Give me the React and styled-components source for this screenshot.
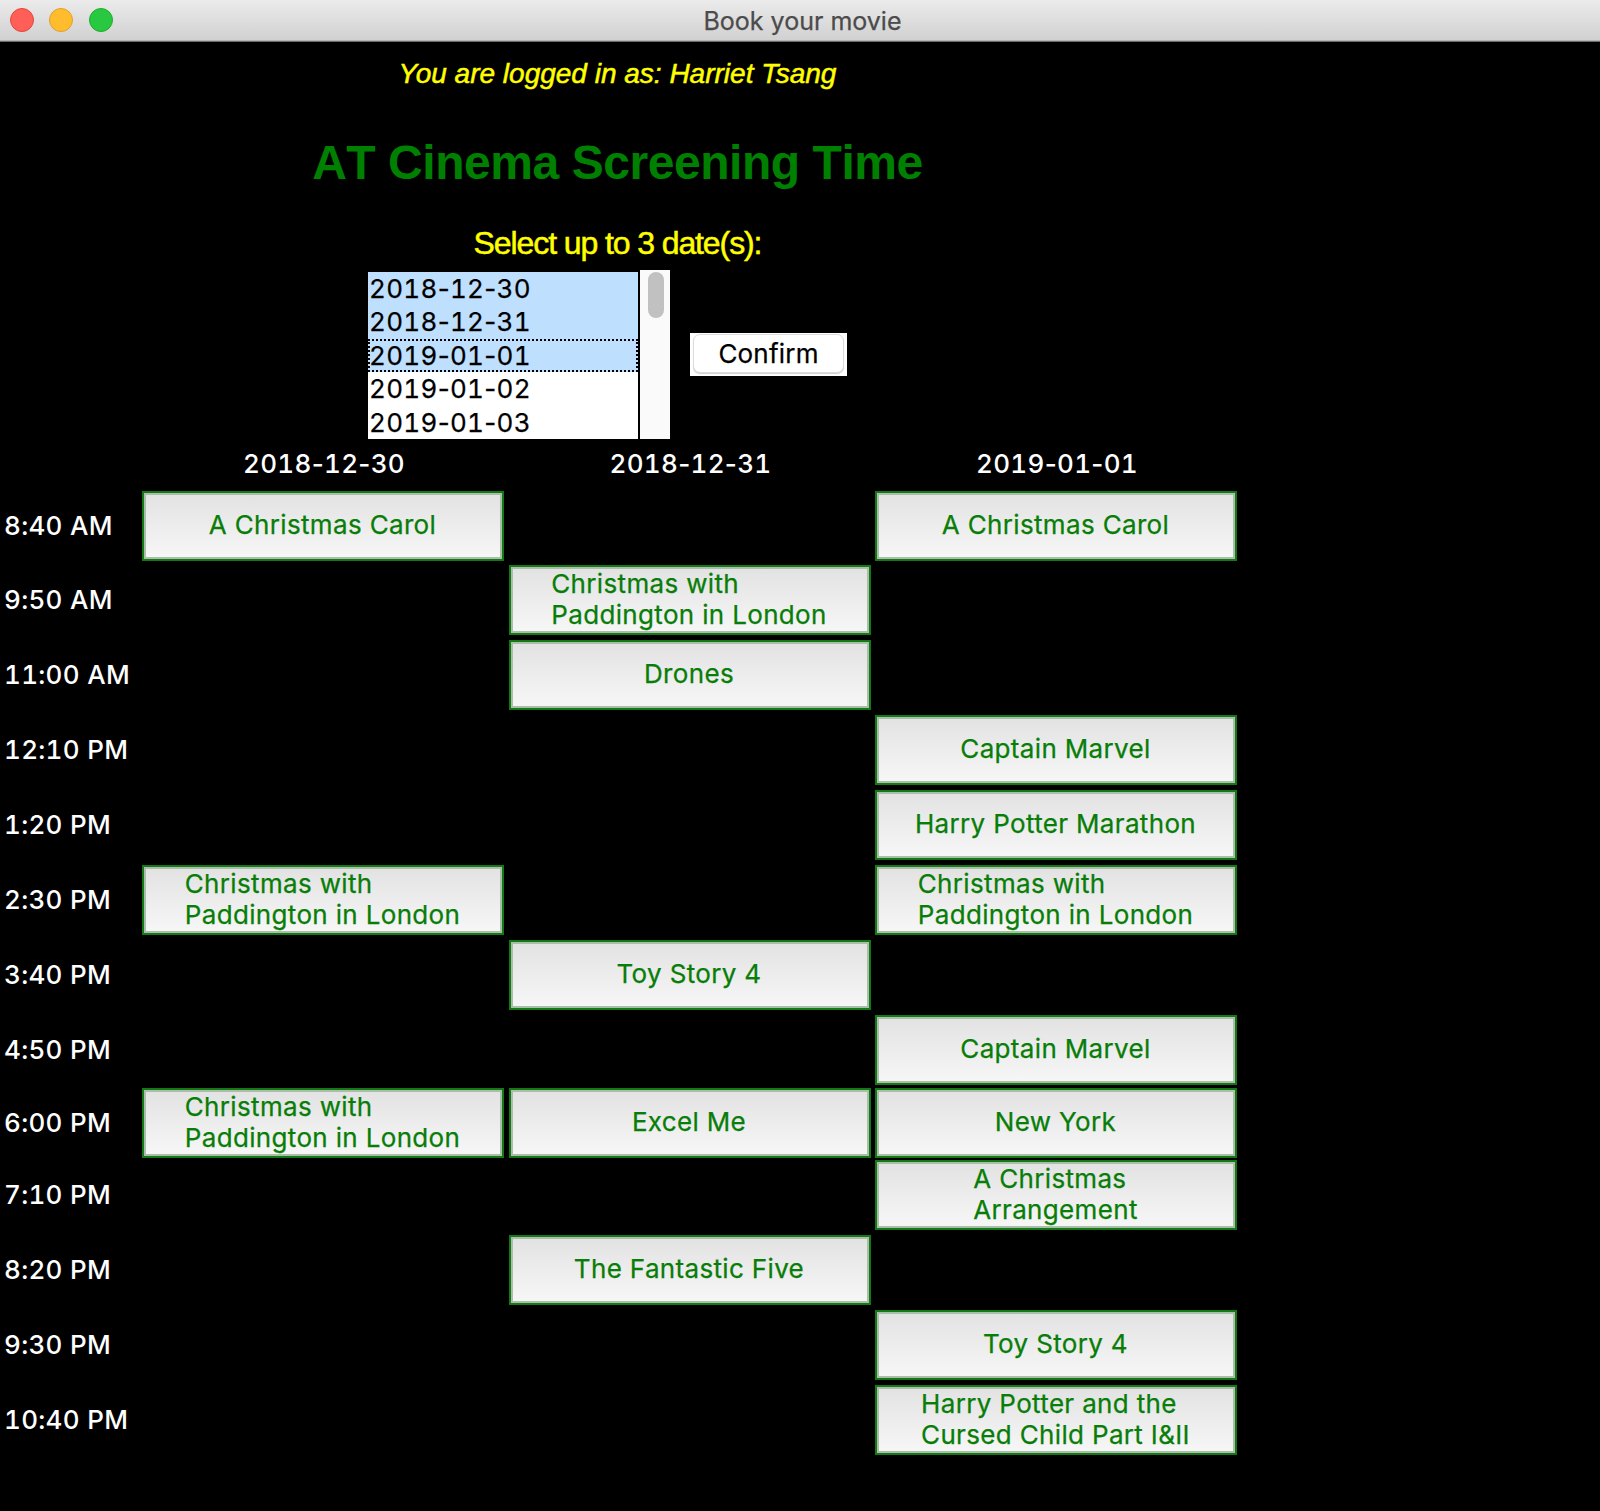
import React from "react";
import styled, { createGlobalStyle } from "styled-components";

const UI = `Inter, "Liberation Sans", sans-serif`;
const ARIAL = `"Liberation Sans", Arial, sans-serif`;

const GlobalStyle = createGlobalStyle`
  * { box-sizing: border-box; }
  body { margin: 0; background: #000; }
`;

const Window = styled.div`
  width: 1600px;
  height: 1511px;
  background: #000;
  overflow: hidden;
  font-family: ${UI};
  font-size: 26px;
`;

const TitleBar = styled.header`
  display: grid;
  grid-template-columns: 1fr auto 1fr;
  align-items: center;
  height: 42px;
  padding: 0 5px 1px 10px;
  background: linear-gradient(#ebebeb, #d0d0d0);
  border-bottom: 1px solid #6c6c6c;
  box-shadow: inset 0 -1px 0 #b4b4b4;
`;

const Lights = styled.div`
  display: flex;
  gap: 15.3px;
`;

const Light = styled.span`
  width: 24px;
  height: 24px;
  border-radius: 50%;
  background: ${(p) => p.$fill};
  border: 1px solid ${(p) => p.$edge};
`;

const WindowTitle = styled.span`
  padding-top: 2px;
  color: #4b4b4b;
  font-size: 25px;
  line-height: 38px;
  -webkit-text-stroke: 0.25px #4b4b4b;
`;

const Content = styled.main`
  width: 1237px;
`;

const Intro = styled.div`
  padding: 14px 2px 0 0;
  text-align: center;
`;

const Login = styled.p`
  margin: 0;
  font: italic 28px/36px ${ARIAL};
  color: #ffff00;
  -webkit-text-stroke: 0.5px #ffff00;
`;

const Heading = styled.h1`
  margin: 42px 0 0;
  font: bold 48px/58px ${ARIAL};
  font-kerning: none;
  letter-spacing: -0.45px;
  color: #008000;
`;

const Prompt = styled.p`
  margin: 31px 0 0;
  font: 32px/40px ${ARIAL};
  letter-spacing: -1.1px;
  color: #ffff00;
  -webkit-text-stroke: 0.5px #ffff00;
`;

const Picker = styled.div`
  display: flex;
  align-items: center;
  justify-content: flex-start;
  gap: 20px;
  margin: 7px 0 0 368px;
`;

const ListFrame = styled.div`
  display: flex;
  align-items: flex-end;
  gap: 2px;
  height: 169px;
`;

const DateList = styled.ul`
  width: 270px;
  margin: 0;
  padding: 0;
  list-style: none;
  background: #fff;
`;

const DateOption = styled.li`
  height: 33.5px;
  padding-left: 1px;
  line-height: 33.5px;
  color: #000;
  background: ${(p) => (p.$selected ? "#bfdfff" : "#fff")};
  outline: ${(p) => (p.$focused ? "2px dotted #000" : "none")};
  outline-offset: -2px;
  -webkit-text-stroke: 0.25px #000;
`;

const Digits = styled.span`
  font-feature-settings: "tnum";
  letter-spacing: 0.3px;
`;

const Dash = styled.span`
  font-feature-settings: normal;
`;

const Track = styled.div`
  width: 30px;
  height: 169px;
  padding: 2px 0 0 8px;
  background: #fafafa;
`;

const Thumb = styled.div`
  width: 16px;
  height: 46px;
  border-radius: 8px;
  background: #c1c1c1;
`;

const ConfirmFrame = styled.div`
  width: 157px;
  height: 43px;
  padding: 1px 3px 3px;
  background: #fff;
`;

const ConfirmButton = styled.button`
  width: 151px;
  height: 39px;
  padding: 1px 0 0;
  border: 1px solid #dcdcdc;
  border-radius: 7px;
  background: #fff;
  box-shadow: 0 1px 1px #cfcfcf;
  font: 26px/34px ${UI};
  letter-spacing: 0.2px;
  color: #000;
  -webkit-text-stroke: 0.25px #000;
`;

const Row = styled.div`
  display: grid;
  grid-template-columns: 137.5px 362px 362px 362px;
  column-gap: 4.5px;
  align-items: start;
  height: ${(p) => p.$height}px;
`;

const DateHeader = styled.span`
  padding-left: 2px;
  text-align: center;
  line-height: 50px;
  font-weight: 500;
  color: #fff;
`;

const Time = styled.span`
  padding-left: 4px;
  line-height: 69px;
  font-weight: 500;
  letter-spacing: 0.3px;
  font-feature-settings: "tnum";
  white-space: nowrap;
  color: #fff;
`;

const MovieButton = styled.button`
  display: flex;
  align-items: center;
  justify-content: center;
  grid-column: ${(p) => p.$column};
  grid-row: 1;
  height: 70px;
  padding: 0 1px 2px 0;
  border: 2px solid #147814;
  background: linear-gradient(#e2e2e2, #f7f7f7);
  box-shadow: inset 0 0 0 2px #a9bfa9;
  font: 26px/31.4px ${UI};
  letter-spacing: 0.34px;
  text-align: left;
  white-space: pre;
  color: #087d08;
  -webkit-text-stroke: 0.25px #087d08;
`;

const dates = [
  { label: "2018-12-30", selected: true },
  { label: "2018-12-31", selected: true },
  { label: "2019-01-01", selected: true, focused: true },
  { label: "2019-01-02" },
  { label: "2019-01-03" },
];

const PADDINGTON = "Christmas with\nPaddington in London";

const screenings = [
  { time: "8:40 AM", height: 74, films: ["A Christmas Carol", null, "A Christmas Carol"] },
  { time: "9:50 AM", height: 75, films: [null, PADDINGTON, null] },
  { time: "11:00 AM", height: 75, films: [null, "Drones", null] },
  { time: "12:10 PM", height: 75, films: [null, null, "Captain Marvel"] },
  { time: "1:20 PM", height: 75, films: [null, null, "Harry Potter Marathon"] },
  { time: "2:30 PM", height: 75, films: [PADDINGTON, null, PADDINGTON] },
  { time: "3:40 PM", height: 75, films: [null, "Toy Story 4", null] },
  { time: "4:50 PM", height: 73, films: [null, null, "Captain Marvel"] },
  { time: "6:00 PM", height: 72, films: [PADDINGTON, "Excel Me", "New York"] },
  { time: "7:10 PM", height: 75, films: [null, null, "A Christmas\nArrangement"] },
  { time: "8:20 PM", height: 75, films: [null, "The Fantastic Five", null] },
  { time: "9:30 PM", height: 75, films: [null, null, "Toy Story 4"] },
  { time: "10:40 PM", height: 75, films: [null, null, "Harry Potter and the\nCursed Child Part I&II"] },
];

function DateText({ value }) {
  const [year, month, day] = value.split("-");
  return (
    <Digits>
      {year}
      <Dash>-</Dash>
      {month}
      <Dash>-</Dash>
      {day}
    </Digits>
  );
}

export default function App() {
  return (
    <Window>
      <GlobalStyle />
      <TitleBar>
        <Lights>
          <Light $fill="#ff5f57" $edge="#e2463f" />
          <Light $fill="#ffbd2e" $edge="#e0a02a" />
          <Light $fill="#28c940" $edge="#1dad2b" />
        </Lights>
        <WindowTitle>Book your movie</WindowTitle>
      </TitleBar>
      <Content>
        <Intro>
          <Login>You are logged in as: Harriet Tsang</Login>
          <Heading>AT Cinema Screening Time</Heading>
          <Prompt>Select up to 3 date(s):</Prompt>
        </Intro>
        <Picker>
          <ListFrame>
            <DateList>
              {dates.map((d) => (
                <DateOption key={d.label} $selected={d.selected} $focused={d.focused}>
                  <DateText value={d.label} />
                </DateOption>
              ))}
            </DateList>
            <Track>
              <Thumb />
            </Track>
          </ListFrame>
          <ConfirmFrame>
            <ConfirmButton>Confirm</ConfirmButton>
          </ConfirmFrame>
        </Picker>
        <Row $height={52}>
          <span />
          {dates.slice(0, 3).map((d) => (
            <DateHeader key={d.label}>
              <DateText value={d.label} />
            </DateHeader>
          ))}
        </Row>
        {screenings.map((s) => (
          <Row key={s.time} $height={s.height}>
            <Time>{s.time}</Time>
            {s.films.map((film, i) =>
              film ? (
                <MovieButton key={i} $column={i + 2}>
                  {film}
                </MovieButton>
              ) : null
            )}
          </Row>
        ))}
      </Content>
    </Window>
  );
}
